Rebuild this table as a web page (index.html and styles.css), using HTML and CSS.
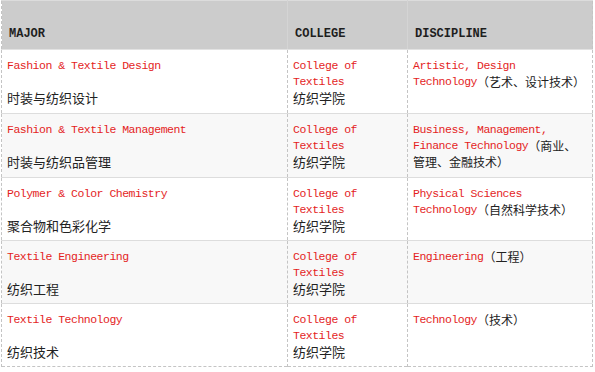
FILE: index.html
```html
<!DOCTYPE html>
<html lang="zh">
<head>
<meta charset="utf-8">
<title>Majors</title>
<link rel="stylesheet" href="styles.css">
</head>
<body>
<table class="majors">
  <colgroup>
    <col class="c1"><col class="c2"><col class="c3">
  </colgroup>
  <thead>
    <tr><th>MAJOR</th><th>COLLEGE</th><th>DISCIPLINE</th></tr>
  </thead>
  <tbody>
    <tr class="tall">
      <td><div class="en">Fashion &amp; Textile Design</div><div class="zh gap">时装与纺织设计</div></td>
      <td><div class="en">College of Textiles</div><div class="zh">纺织学院</div></td>
      <td><span class="en">Artistic, Design<br>Technology</span><span class="zh-s">（艺术、设计技术）</span></td>
    </tr>
    <tr class="tall">
      <td><div class="en">Fashion &amp; Textile Management</div><div class="zh gap">时装与纺织品管理</div></td>
      <td><div class="en">College of Textiles</div><div class="zh">纺织学院</div></td>
      <td><span class="en">Business, Management,<br>Finance Technology</span><span class="zh-s">（商业、<br>管理、金融技术）</span></td>
    </tr>
    <tr>
      <td><div class="en">Polymer &amp; Color Chemistry</div><div class="zh gap">聚合物和色彩化学</div></td>
      <td><div class="en">College of Textiles</div><div class="zh">纺织学院</div></td>
      <td><span class="en">Physical Sciences<br>Technology</span><span class="zh-s">（自然科学技术）</span></td>
    </tr>
    <tr>
      <td><div class="en">Textile Engineering</div><div class="zh gap">纺织工程</div></td>
      <td><div class="en">College of Textiles</div><div class="zh">纺织学院</div></td>
      <td><span class="en">Engineering</span><span class="zh-s">（工程）</span></td>
    </tr>
    <tr>
      <td><div class="en">Textile Technology</div><div class="zh gap">纺织技术</div></td>
      <td><div class="en">College of Textiles</div><div class="zh">纺织学院</div></td>
      <td><span class="en">Technology</span><span class="zh-s">（技术）</span></td>
    </tr>
  </tbody>
</table>
</body>
</html>
```
FILE: styles.css
```css
html, body {
  margin: 0;
  padding: 0;
  background: #ffffff;
}
body {
  font-family: "Liberation Mono", "Noto Sans CJK SC", monospace;
  padding-left: 1px;
}
.majors {
  border-collapse: collapse;
  width: 591px;
  table-layout: fixed;
  border-left: 1px dashed #c4c4c4;
  border-right: 1px dashed #c4c4c4;
  border-bottom: 1px dashed #c4c4c4;
}
.c1 { width: 286px; }
.c2 { width: 120px; }
.c3 { width: 185px; }
.majors th {
  background: #cccccc;
  border-top: 1px solid #dcdcdc;
  border-right: 1px solid #d4d4d4;
  border-bottom: 1px solid #e2e2e2;
  text-align: left;
  font-family: "Liberation Mono", monospace;
  font-weight: bold;
  font-size: 12px;
  line-height: 16px;
  color: #1e1e1e;
  padding: 25px 7px 7px;
}
.majors th:last-child { border-right: none; }
.majors td {
  vertical-align: top;
  padding: 8px 5px 6px;
  font-size: 11px;
  line-height: 16px;
  border-top: 1px solid #dddddd;
  border-left: 1px dashed #c4c4c4;
  height: 48px;
}
.majors tr.tall td { height: 49px; }
.majors tbody tr:nth-child(even) td { background: #f8f8f8; }
.en {
  color: #e41e1e;
  font-family: "Liberation Mono", monospace;
  font-size: 11.5px;
  letter-spacing: -0.5px;
  line-height: 16px;
  vertical-align: top;
}
.zh {
  color: #222222;
  font-family: "Noto Sans CJK SC", sans-serif;
  font-size: 13px;
  line-height: 16px;
}
.zh-s {
  color: #222222;
  font-family: "Noto Sans CJK SC", sans-serif;
  font-size: 12px;
  line-height: 16px;
  vertical-align: top;
}
.gap { margin-top: 16px; }
```
